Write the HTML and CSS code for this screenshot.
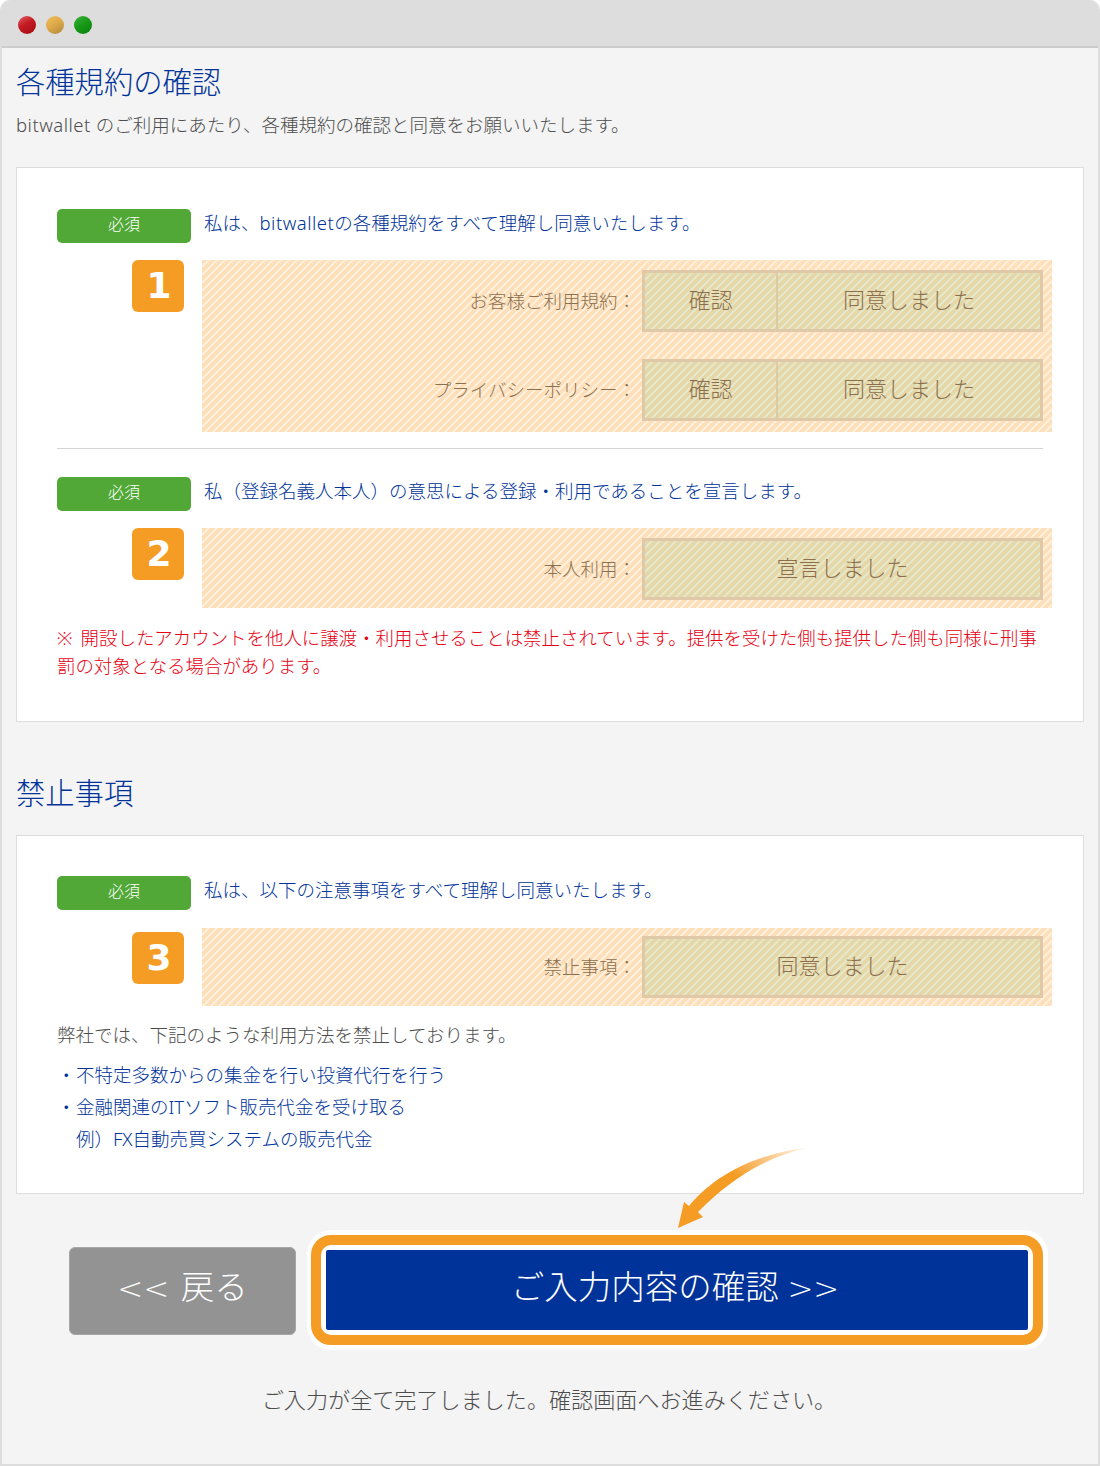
FILE: index.html
```html
<!DOCTYPE html>
<html lang="ja">
<head>
<meta charset="utf-8">
<title>各種規約の確認</title>
<link rel="stylesheet" href="styles.css">
</head>
<body>
<div class="window">
  <div class="titlebar">
    <span class="light red"></span><span class="light amber"></span><span class="light green"></span>
  </div>
  <div class="content">
    <h2 class="heading">各種規約の確認</h2>
    <p class="lead"><span class="latin">bitwallet</span> のご利用にあたり、各種規約の確認と同意をお願いいたします。</p>

    <section class="card card-a">
      <div class="req"><span class="badge">必須</span><span class="req-text">私は、<span class="latin">bitwallet</span>の各種規約をすべて理解し同意いたします。</span></div>
      <div class="step">
        <span class="num">1</span>
        <div class="hatch hatch-1">
          <div class="line"><span class="label">お客様ご利用規約：</span><div class="btns"><span class="btn btn-s">確認</span><span class="btn btn-l">同意しました</span></div></div>
          <div class="line"><span class="label">プライバシーポリシー：</span><div class="btns"><span class="btn btn-s">確認</span><span class="btn btn-l">同意しました</span></div></div>
        </div>
      </div>
      <hr class="rule">
      <div class="req"><span class="badge">必須</span><span class="req-text">私（登録名義人本人）の意思による登録・利用であることを宣言します。</span></div>
      <div class="step">
        <span class="num">2</span>
        <div class="hatch hatch-2">
          <div class="line"><span class="label">本人利用：</span><div class="btns"><span class="btn btn-full">宣言しました</span></div></div>
        </div>
      </div>
      <p class="warn">※ 開設したアカウントを他人に譲渡・利用させることは禁止されています。提供を受けた側も提供した側も同様に刑事罰の対象となる場合があります。</p>
    </section>

    <h2 class="heading heading-2">禁止事項</h2>

    <section class="card card-b">
      <div class="req"><span class="badge">必須</span><span class="req-text">私は、以下の注意事項をすべて理解し同意いたします。</span></div>
      <div class="step">
        <span class="num num-3">3</span>
        <div class="hatch hatch-3">
          <div class="line"><span class="label">禁止事項：</span><div class="btns"><span class="btn btn-full">同意しました</span></div></div>
        </div>
      </div>
      <p class="note">弊社では、下記のような利用方法を禁止しております。</p>
      <ul class="list">
        <li>不特定多数からの集金を行い投資代行を行う</li>
        <li>金融関連のITソフト販売代金を受け取る<br>例）FX自動売買システムの販売代金</li>
      </ul>
    </section>

    <div class="actions">
      <svg class="arrow" width="130" height="82" viewBox="0 0 130 82" aria-hidden="true">
        <defs><linearGradient id="fade" x1="0" y1="1" x2="1" y2="0">
          <stop offset="0.55" stop-color="#f59c25"/><stop offset="1" stop-color="#f59c25" stop-opacity="0.12"/>
        </linearGradient></defs>
        <path fill="url(#fade)" d="M0 80 L6 54 L11 58 C32 32 72 6 129 0 C84 10 50 34 20 64 L25 69 Z"/>
      </svg>
      <a class="back"><span class="chev chev-back">&lt;&lt;</span> 戻る</a>
      <div class="confirm-ring"><div class="confirm-frame"><a class="confirm">ご入力内容の確認 <span class="chev">&gt;&gt;</span></a></div></div>
    </div>
    <p class="done">ご入力が全て完了しました。確認画面へお進みください。</p>
  </div>
</div>
</body>
</html>
```
FILE: styles.css
```css
* { box-sizing: border-box; }
html, body { margin: 0; padding: 0; background: #fff; }
body {
  width: 1100px;
  height: 1466px;
  font-family: "Noto Sans", "Noto Sans CJK JP", sans-serif;
  font-weight: 300;
  color: #4d4d4d;
}
.window {
  height: 1466px;
  background: #f4f4f4;
  border: 2px solid #ddd;
  border-top: 0;
  border-radius: 10px 10px 0 0;
  overflow: hidden;
}
.titlebar {
  height: 48px;
  margin: 0 -2px;
  background: #ddd;
  border-bottom: 2px solid #ccc;
  padding: 16px 0 0 18px;
  display: flex;
  gap: 10px;
}
.light { width: 18px; height: 18px; border-radius: 50%; }
.red { background: linear-gradient(150deg, #e0606a 0%, #c41a22 45%, #a30c12 100%); }
.amber { background: linear-gradient(150deg, #f0c060 0%, #e0aa48 45%, #b0873f 100%); }
.green { background: linear-gradient(150deg, #3ab03a 0%, #169816 50%, #0a800f 100%); }
.content { padding: 0 14px; position: relative; }
.heading {
  margin: 0;
  padding-top: 12px;
  font-size: 29.3px;
  line-height: 44px;
  font-weight: 300;
  color: #003399;
}
.lead {
  margin: 8px 0 0;
  font-size: 18.5px;
  line-height: 26px;
}
.latin { letter-spacing: 0.5px; }
.card {
  background: #fff;
  border: 1px solid #ddd;
  width: 1068px;
  padding: 41px 40px 0;
}
.card-a { margin-top: 29px; height: 555px; }
.card-b { margin-top: 20px; height: 359px; padding-top: 40px; }
.heading-2 { padding-top: 49px; }
.req { display: flex; align-items: center; height: 34px; }
.badge {
  width: 134px;
  height: 34px;
  background: #51a836;
  border-radius: 5px;
  color: #fff;
  font-size: 16px;
  line-height: 31px;
  text-align: center;
}
.req-text {
  margin-left: 13px;
  font-size: 18.5px;
  line-height: 28px;
  margin-top: -6px;
  color: #003399;
}
.step { display: flex; margin: 17px -9px 0 0; align-items: flex-start; }
.card-b .step { margin-top: 18px; }
.num {
  width: 52px;
  height: 52px;
  margin-left: 75px;
  padding-left: 2px;
  background: #f59c25;
  border-radius: 6px;
  color: #fff;
  font-family: "DejaVu Sans", sans-serif;
  font-weight: 700;
  font-size: 36px;
  line-height: 52px;
  text-align: center;
}
.num-3 { margin-top: 4px; }
.hatch {
  flex: 1;
  margin-left: 18px;
  padding: 10px 9px 0 0;
  background: repeating-linear-gradient(135deg, #fedfba 0, #fedfba 3.6px, #fff0dc 3.6px, #fff0dc 5.657px);
}
.hatch-1 { height: 172px; }
.hatch-2 { height: 80px; }
.hatch-3 { height: 78px; padding-top: 8px; }
.line { display: flex; justify-content: flex-end; align-items: center; height: 62px; }
.line + .line { margin-top: 27px; }
.label { font-size: 18.5px; color: #8c6f4e; margin-right: 6px; padding-bottom: 2px; }
.btns {
  width: 401px;
  height: 62px;
  display: flex;
  border: 3px solid #dfc9a8;
  background: repeating-linear-gradient(135deg, #e6d7a8 0, #e6d7a8 3.6px, #e4e7c8 3.6px, #e4e7c8 5.657px);
}
.btn {
  display: flex;
  align-items: center;
  justify-content: center;
  font-size: 22px;
  color: #8c6f4e;
  padding-bottom: 6px;
}
.btn-s { width: 133px; border-right: 2px solid #dfc9a8; }
.btn-l, .btn-full { flex: 1; }
.rule { margin: 16px 0 0; border: 0; border-top: 1px solid #d4d4d4; height: 1px; }
.rule + .req { margin-top: 28px; }
.warn {
  margin: 16px 0 0;
  font-size: 18.45px;
  line-height: 28px;
  word-spacing: 3.5px;
  color: #e60012;
}
.note { margin: 15px 0 0; font-size: 18.5px; line-height: 28px; }
.list {
  list-style: none;
  margin: 10px 0 0;
  padding: 0 0 0 19px;
  font-size: 18.5px;
  line-height: 32px;
  color: #003399;
}
.list li { position: relative; }
.list li::before { content: "・"; position: absolute; left: -19px; }
.actions {
  position: relative;
  height: 120px;
  margin-top: 36px;
}
.arrow { position: absolute; left: 662px; top: -82px; }
.chev { font-family: "DejaVu Sans", sans-serif; font-weight: 200; font-size: 31px; }
.chev-back { margin-right: 3px; }
.back {
  position: absolute;
  left: 53px;
  top: 17px;
  width: 227px;
  height: 88px;
  background: #939393;
  border: 1px solid #a6a6a6;
  border-radius: 6px;
  color: #fff;
  font-size: 33.5px;
  line-height: 76px;
  text-align: center;
}
.confirm-ring {
  position: absolute;
  left: 291px;
  top: 0;
  width: 741px;
  height: 120px;
  padding: 5px 5px 5px 4px;
  border-radius: 24px;
  background: #fff;
}
.confirm-frame {
  height: 110px;
  border: 10px solid #f59c25;
  border-radius: 20px;
  background: #fff;
  padding: 5px;
}
.confirm {
  display: block;
  height: 80px;
  padding-right: 4px;
  background: #003399;
  border-radius: 2px;
  color: #fff;
  font-size: 33.5px;
  line-height: 72px;
  text-align: center;
}
.done {
  margin: 33px 0 0;
  text-align: center;
  font-size: 22.1px;
  line-height: 32px;
  padding-right: 2px;
}
```
